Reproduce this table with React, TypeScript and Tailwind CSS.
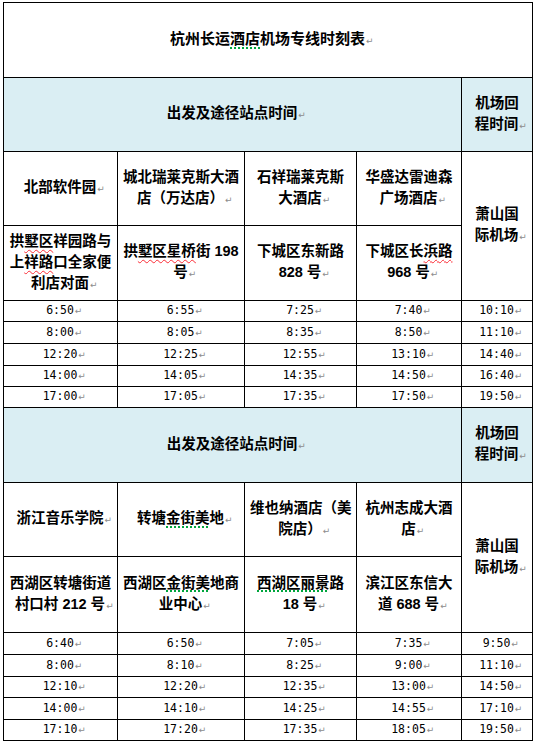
import type { ReactNode } from "react";

// end-of-paragraph mark, takes no width so the text stays centred
function Mark() {
  return (
    <span className="inline-block w-0 whitespace-nowrap pl-px font-['DejaVu_Sans',sans-serif] text-[9px] font-normal text-[#8c8c8c]">
      ↵
    </span>
  );
}

function Red({ children }: { children: ReactNode }) {
  return (
    <span className="underline decoration-red-500 decoration-wavy decoration-1 underline-offset-[3px]">
      {children}
    </span>
  );
}

function Green({ children }: { children: ReactNode }) {
  return (
    <span className="underline decoration-green-600 decoration-dotted decoration-2 underline-offset-[3px]">
      {children}
    </span>
  );
}

function Lines({ lines }: { lines: ReactNode[] }) {
  return (
    <>
      {lines.map((l, i) => (
        <div key={i} className="whitespace-nowrap">
          {l}
          {i === lines.length - 1 && <Mark />}
        </div>
      ))}
    </>
  );
}

type Section = {
  stations: ReactNode[][];
  addresses: ReactNode[][];
  stationH: string;
  addressH: string;
  times: { h: string; t: string[] }[];
};

const sections: Section[] = [
  {
    stationH: "h-[74px]",
    addressH: "h-[75px]",
    stations: [
      ["北部软件园"],
      ["城北瑞莱克斯大酒", "店（万达店）"],
      ["石祥瑞莱克斯", "大酒店"],
      ["华盛达雷迪森", "广场酒店"],
    ],
    addresses: [
      [
        <>拱<Red>墅区</Red>祥园路与</>,
        <>上<Red>祥路</Red>口全家便</>,
        "利店对面",
      ],
      [<>拱<Red>墅区星桥</Red>街 198</>, "号"],
      ["下城区东新路", "828 号"],
      [<>下城区长<Red>浜路</Red></>, "968 号"],
    ],
    times: [
      { h: "h-[21px]", t: ["6:50", "6:55", "7:25", "7:40", "10:10"] },
      { h: "h-[22px]", t: ["8:00", "8:05", "8:35", "8:50", "11:10"] },
      { h: "h-[22px]", t: ["12:20", "12:25", "12:55", "13:10", "14:40"] },
      { h: "h-[21px]", t: ["14:00", "14:05", "14:35", "14:50", "16:40"] },
      { h: "h-[21px]", t: ["17:00", "17:05", "17:35", "17:50", "19:50"] },
    ],
  },
  {
    stationH: "h-[74px]",
    addressH: "h-[76px]",
    stations: [
      ["浙江音乐学院"],
      [<>转塘<Green>金街美</Green>地</>],
      ["维也纳酒店（美", "院店）"],
      ["杭州志成大酒", "店"],
    ],
    addresses: [
      ["西湖区转塘街道", "村口村 212 号"],
      [<>西湖区<Green>金街美</Green>地商</>, "业中心"],
      [<><Green>西湖区丽景</Green>路</>, "18 号"],
      ["滨江区东信大", "道 688 号"],
    ],
    times: [
      { h: "h-[22px]", t: ["6:40", "6:50", "7:05", "7:35", "9:50"] },
      { h: "h-[22px]", t: ["8:00", "8:10", "8:25", "9:00", "11:10"] },
      { h: "h-[21px]", t: ["12:10", "12:20", "12:35", "13:00", "14:50"] },
      { h: "h-[22px]", t: ["14:00", "14:10", "14:25", "14:55", "17:10"] },
      { h: "h-[21px]", t: ["17:10", "17:20", "17:35", "18:05", "19:50"] },
    ],
  },
];

const cell = "border border-black px-[5px] py-0 text-center align-middle";

export default function App() {
  return (
    <div className="min-h-screen bg-white pl-[3px] pt-[2px] text-black">
      <table className="w-[529px] table-fixed border-collapse font-['Liberation_Sans','Noto_Sans_CJK_SC',sans-serif] text-[14.5px] font-bold leading-[21px]">
        <colgroup>
          <col className="w-[114px]" />
          <col className="w-[127px]" />
          <col className="w-[112px]" />
          <col className="w-[105px]" />
          <col className="w-[71px]" />
        </colgroup>
        <tbody>
          <tr>
            <td colSpan={5} className={`${cell} h-[75px] text-[15px]`}>
              杭州长运<Green>酒店</Green>机场专线时刻表
              <Mark />
            </td>
          </tr>
          {sections.map((s, si) => (
            <SectionRows key={si} s={s} first={si === 0} />
          ))}
        </tbody>
      </table>
    </div>
  );
}

function SectionRows({ s, first }: { s: Section; first: boolean }) {
  return (
    <>
      <tr className="bg-[#daeef3]">
        <td colSpan={4} className={`${cell} ${first ? "h-[74px]" : "h-[75px]"}`}>
          出发及途径站点时间
          <Mark />
        </td>
        <td className={cell}>
          <Lines lines={["机场回", "程时间"]} />
        </td>
      </tr>
      <tr>
        {s.stations.map((lines, i) => (
          <td key={i} className={`${cell} ${s.stationH}`}>
            <Lines lines={lines} />
          </td>
        ))}
        <td rowSpan={2} className={cell}>
          <Lines lines={["萧山国", "际机场"]} />
        </td>
      </tr>
      <tr>
        {s.addresses.map((lines, i) => (
          <td key={i} className={`${cell} ${s.addressH}`}>
            <Lines lines={lines} />
          </td>
        ))}
      </tr>
      {s.times.map((row, ri) => (
        <tr key={ri}>
          {row.t.map((t, i) => (
            <td
              key={i}
              className={`${cell} ${row.h} font-['DejaVu_Sans_Mono',monospace] text-[11.5px] font-normal leading-none`}
            >
              {t}
              <Mark />
            </td>
          ))}
        </tr>
      ))}
    </>
  );
}
